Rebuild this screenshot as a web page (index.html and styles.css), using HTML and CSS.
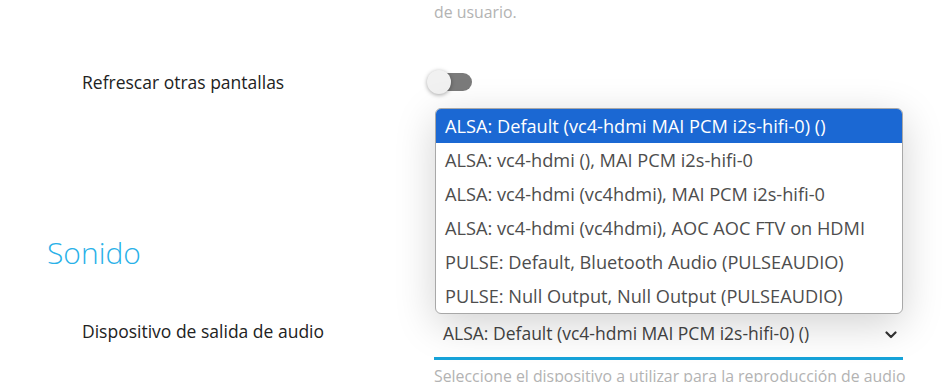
FILE: index.html
```html
<!DOCTYPE html>
<html lang="es">
<head>
<meta charset="utf-8">
<title>Sonido</title>
<link rel="stylesheet" href="styles.css">
</head>
<body>
<div class="page">
  <div class="row row-desc">
    <div class="label"></div>
    <div class="control"><p class="help">de usuario.</p></div>
  </div>

  <div class="row row-toggle">
    <div class="label">Refrescar otras pantallas</div>
    <div class="control">
      <span class="switch"><span class="knob"></span></span>
    </div>
  </div>

  <h2 class="section-title">Sonido</h2>

  <div class="row row-select">
    <div class="label">Dispositivo de salida de audio</div>
    <div class="control">
      <div class="select">
        <span class="select-value">ALSA: Default (vc4-hdmi MAI PCM i2s-hifi-0) ()</span>
        <svg class="chevron" width="12" height="8" viewBox="0 0 12 8"><path d="M1.5 1.5 L6 6 L10.5 1.5" fill="none" stroke="#333" stroke-width="2.2" stroke-linecap="round" stroke-linejoin="round"/></svg>
        <ul class="menu">
          <li class="opt selected">ALSA: Default (vc4-hdmi MAI PCM i2s-hifi-0) ()</li>
          <li class="opt">ALSA: vc4-hdmi (), MAI PCM i2s-hifi-0</li>
          <li class="opt">ALSA: vc4-hdmi (vc4hdmi), MAI PCM i2s-hifi-0</li>
          <li class="opt">ALSA: vc4-hdmi (vc4hdmi), AOC AOC FTV on HDMI</li>
          <li class="opt">PULSE: Default, Bluetooth Audio (PULSEAUDIO)</li>
          <li class="opt">PULSE: Null Output, Null Output (PULSEAUDIO)</li>
        </ul>
      </div>
      <p class="help help-below">Seleccione el dispositivo a utilizar para la reproducción de audio</p>
    </div>
  </div>
</div>
</body>
</html>
```

FILE: styles.css
```css
html, body {
  margin: 0;
  padding: 0;
  background: #ffffff;
}

body {
  font-family: "Open Sans", "Noto Sans", sans-serif;
  width: 952px;
  height: 382px;
  overflow: hidden;
}

.page {
  padding-left: 82px;
}

.row {
  display: grid;
  grid-template-columns: 352px 469px;
  align-items: center;
}

.label {
  font-size: 17.5px;
  font-weight: 500;
  color: #222222;
}

.help {
  margin: 0;
  font-size: 15.85px;
  line-height: 22px;
  color: #b3b3b3;
  white-space: nowrap;
}

.row-desc {
  padding-top: 1px;
}

.row-toggle {
  margin-top: 46px;
  height: 26px;
}

.switch {
  display: block;
  position: relative;
  width: 44px;
  height: 18px;
  margin-left: -6px;
  border-radius: 9px;
  background: #7b7b7b;
}

.knob {
  position: absolute;
  left: -1px;
  top: -3px;
  width: 24px;
  height: 24px;
  border-radius: 50%;
  background: #f1f1f1;
  box-shadow: 0 1px 4px rgba(0, 0, 0, 0.35);
}

.section-title {
  margin: 138px 0 0 -35px;
  font-size: 30px;
  font-weight: 300;
  line-height: 40px;
  color: #29b1e8;
}

.row-select {
  margin-top: 39px;
  align-items: start;
}

.row-select .label {
  margin-top: 7px;
}

.select {
  position: relative;
  height: 45px;
  display: flex;
  align-items: center;
  padding: 0 6px 0 9px;
  border-bottom: 3px solid #17a3d9;
}

.select-value {
  flex: 1;
  font-size: 17.5px;
  color: #444444;
  padding-bottom: 4px;
}

.chevron {
  margin-top: 0;
}

.menu {
  position: absolute;
  left: 1px;
  right: 0;
  bottom: 100%;
  margin: 0 0 -2px 0;
  padding: 0;
  list-style: none;
  background: #ffffff;
  border: 1px solid #a8a8a8;
  border-radius: 6px;
  overflow: hidden;
  box-shadow: 0 10px 40px rgba(0, 0, 0, 0.18);
}

.opt {
  height: 34px;
  line-height: 34px;
  padding-left: 9px;
  font-size: 18.2px;
  color: #4d4d4d;
  white-space: nowrap;
}

.opt.selected {
  background: #1b68d3;
  color: #ffffff;
}

.help-below {
  margin-top: 5px;
}
```
